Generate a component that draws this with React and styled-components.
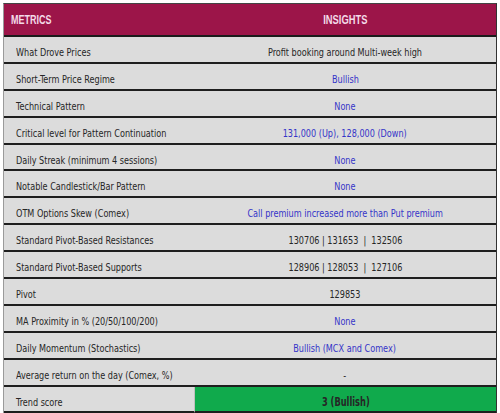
import React from "react";
import styled, { createGlobalStyle } from "styled-components";

const Global = createGlobalStyle`
  html, body { margin: 0; padding: 0; background: #ffffff; }
  body { font-family: "DejaVu Sans Condensed", "DejaVu Sans", sans-serif; }
`;

const Page = styled.div`
  width: 500px;
  height: 413px;
  overflow: hidden;
  padding: 3px 3px 0 3px;
  box-sizing: border-box;
`;

const Table = styled.div`
  display: grid;
  grid-template-columns: 190px 1fr;
  border-left: 1px solid #9a9a9a;
  border-right: 1px solid #333;
  border-top: 1px solid #444;
  background: #dcdcdc;
`;

const HeadCell = styled.div`
  box-sizing: border-box;
  height: 33px;
  background: #9c1549;
  color: #f3dbe8;
  font-family: "Liberation Sans", Arial, sans-serif;
  font-weight: bold;
  font-size: 12px;
  display: flex;
  align-items: center;
  justify-content: ${(p) => (p.$center ? "center" : "flex-start")};
  padding-left: ${(p) => (p.$center ? "0" : "7px")};
  border-bottom: 2px solid #1b1b1b;
`;

const Cell = styled.div`
  box-sizing: border-box;
  height: 26.9px;
  padding-top: 6px;
  border-bottom: 2px solid #1e1e1e;
  display: flex;
  align-items: center;
  white-space: pre;
  justify-content: ${(p) => (p.$center ? "center" : "flex-start")};
  padding-left: ${(p) => (p.$center ? "0" : "12px")};
  color: ${(p) => (p.$blue ? "#3434c8" : "#262626")};
  background: ${(p) => (p.$green ? "#10aa4c" : "transparent")};
  font-weight: ${(p) => (p.$bold ? "bold" : "normal")};
  font-size: ${(p) => (p.$bold ? "11.5px" : "11px")};
  border-left: ${(p) => (p.$green ? "1px solid #bfbfbf" : "none")};
`;

const Squeeze = styled.span`
  display: inline-block;
  transform: scaleX(${(p) => p.$k || 0.82});
  transform-origin: ${(p) => (p.$left ? "left center" : "center center")};
`;

const rows = [
  ["What Drove Prices", "Profit booking around Multi-week high", false],
  ["Short-Term Price Regime", "Bullish", true],
  ["Technical Pattern", "None", true],
  ["Critical level for Pattern Continuation", "131,000 (Up), 128,000 (Down)", true],
  ["Daily Streak (minimum 4 sessions)", "None", true],
  ["Notable Candlestick/Bar Pattern", "None", true],
  ["OTM Options Skew (Comex)", "Call premium increased more than Put premium", true],
  ["Standard Pivot-Based Resistances", "130706 | 131653  |  132506", false],
  ["Standard Pivot-Based Supports", "128906 | 128053  |  127106", false],
  ["Pivot", "129853", false],
  ["MA Proximity in % (20/50/100/200)", "None", true],
  ["Daily Momentum (Stochastics)", "Bullish (MCX and Comex)", true],
  ["Average return on the day (Comex, %)", "-", false],
];

export default function App() {
  return (
    <Page>
      <Global />
      <Table>
        <HeadCell><Squeeze $left $k={0.75}>METRICS</Squeeze></HeadCell>
        <HeadCell $center><Squeeze $k={0.78}>INSIGHTS</Squeeze></HeadCell>
        {rows.map(([m, v, blue]) => (
          <React.Fragment key={m}>
            <Cell><Squeeze $left>{m}</Squeeze></Cell>
            <Cell $center $blue={blue}><Squeeze>{v}</Squeeze></Cell>
          </React.Fragment>
        ))}
        <Cell><Squeeze $left>Trend score</Squeeze></Cell>
        <Cell $center $green $bold><Squeeze $k={0.8}>3 (Bullish)</Squeeze></Cell>
      </Table>
    </Page>
  );
}
